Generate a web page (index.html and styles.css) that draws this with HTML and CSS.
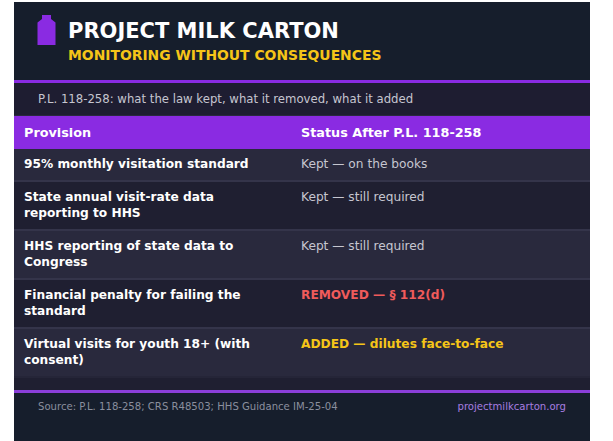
FILE: index.html
```html
<!DOCTYPE html>
<html>
<head>
<meta charset="utf-8">
<link rel="stylesheet" href="styles.css">
</head>
<body>
<div class="card">
  <header class="brand">
    <svg class="logo" width="19" height="30" viewBox="0 0 19 30" aria-hidden="true">
      <path d="M5 0 H14 V4 L18.5 7.5 V30 H0.5 V7.5 L5 4 Z" fill="#8a2be2"/>
    </svg>
    <div class="titles">
      <h1>PROJECT MILK CARTON</h1>
      <p class="tagline">MONITORING WITHOUT CONSEQUENCES</p>
    </div>
  </header>
  <div class="subbar">P.L. 118-258: what the law kept, what it removed, what it added</div>
  <div class="table">
    <div class="row head">
      <div class="c1">Provision</div>
      <div class="c2">Status After P.L. 118-258</div>
    </div>
    <div class="row light">
      <div class="c1">95% monthly visitation standard</div>
      <div class="c2 kept">Kept — on the books</div>
    </div>
    <div class="row dark">
      <div class="c1">State annual visit-rate data reporting to HHS</div>
      <div class="c2 kept">Kept — still required</div>
    </div>
    <div class="row light">
      <div class="c1">HHS reporting of state data to Congress</div>
      <div class="c2 kept">Kept — still required</div>
    </div>
    <div class="row dark">
      <div class="c1">Financial penalty for failing the standard</div>
      <div class="c2 removed">REMOVED — § 112(d)</div>
    </div>
    <div class="row light last">
      <div class="c1">Virtual visits for youth 18+ (with consent)</div>
      <div class="c2 added">ADDED — dilutes face-to-face</div>
    </div>
  </div>
  <footer class="foot">
    <span class="src">Source: P.L. 118-258; CRS R48503; HHS Guidance IM-25-04</span>
    <span class="site">projectmilkcarton.org</span>
  </footer>
</div>
</body>
</html>
```
FILE: styles.css
```css
html, body {
  margin: 0;
  padding: 0;
  background: #ffffff;
}
body {
  font-family: "DejaVu Sans", "Noto Sans", sans-serif;
  padding: 2px 0 0 14px;
  overflow: hidden;
}
.card {
  width: 576px;
  background: #161e2c;
  height: 460px;
}
.brand {
  display: flex;
  align-items: flex-start;
  gap: 12px;
  padding: 13px 0 0 23px;
  height: 81px;
  box-sizing: border-box;
  border-bottom: 3px solid #8a2be2;
}
.logo {
  display: block;
  flex: none;
}
.titles h1 {
  margin: 3px 0 0 0;
  font-size: 21px;
  line-height: 26px;
  font-weight: bold;
  color: #ffffff;
}
.tagline {
  margin: 3px 0 0 0;
  font-size: 13.9px;
  line-height: 16px;
  font-weight: bold;
  color: #f5c518;
}
.subbar {
  background: #1e1d31;
  color: #c6c6d0;
  font-size: 11.7px;
  height: 32px;
  line-height: 32px;
  padding-left: 24px;
  border-bottom: 1px solid #2a2940;
}
.table {
  background: #1f1f31;
  padding-bottom: 12px;
  border-bottom: 3px solid #8b3fd9;
}
.row {
  display: flex;
  padding: 7px 10px 8px 10px;
  line-height: 16px;
  font-size: 12.2px;
  border-bottom: 2px solid #34344a;
}
.row.head {
  background: #8a2be2;
  padding: 9px 10px 8px 10px;
  border-bottom: none;
  font-weight: bold;
  font-size: 12.8px;
  color: #ffffff;
}
.row.light { background: #29293d; }
.row.dark { background: #1f1f31; }
.row.last { border-bottom-color: #252538; }
.c1 {
  width: 277px;
  flex: none;
  padding-right: 22px;
  box-sizing: border-box;
  color: #ffffff;
  font-weight: bold;
}
.c2 {
  flex: 1;
  color: #ffffff;
}
.c2.kept { color: #c6c6d0; }
.c2.removed { color: #ef5b5b; font-weight: bold; }
.c2.added { color: #f5c518; font-weight: bold; }
.foot {
  display: flex;
  justify-content: space-between;
  padding: 6px 24px 0 24px;
  font-size: 10.1px;
  line-height: 16px;
}
.src { color: #8a8f9e; }
.site { color: #a77de0; }
```
